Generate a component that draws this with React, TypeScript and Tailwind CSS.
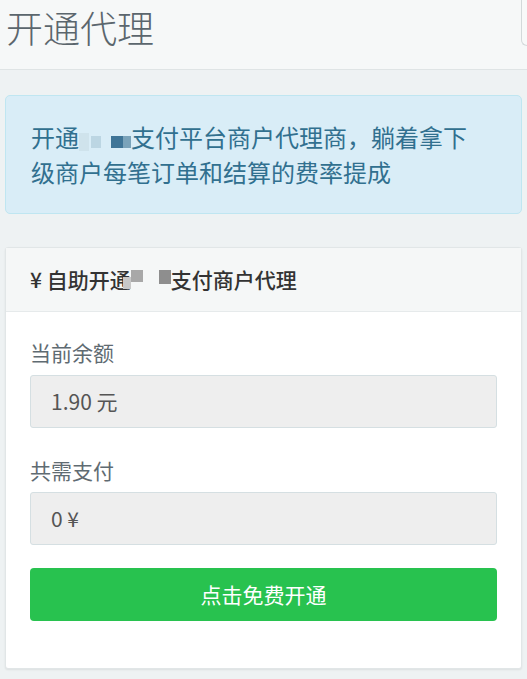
const font = { fontFamily: '"Noto Sans CJK SC", "Noto Sans", sans-serif' };

function Blur({ tone }: { tone: "info" | "gray" }) {
  // the masked brand name in the screenshot
  if (tone === "info") {
    return (
      <span className="inline-flex h-[24px] w-[52px] items-center align-[-4px]">
        <span className="h-[18px] w-[10px] bg-[#cfe3ec]" />
        <span className="ml-[2px] h-[12px] w-[10px] bg-[#bcd6e3]" />
        <span className="ml-[10px] h-[12px] w-[12px] bg-[#3f7597]" />
        <span className="h-[12px] w-[8px] bg-[#7aa3ba]" />
      </span>
    );
  }
  return (
    <span className="inline-flex h-[22px] w-[40px] items-start align-[-3px]">
      <span className="-ml-[8px] mt-[8px] h-[12px] w-[8px] bg-[#c8c8c8]" />
      <span className="mt-[1px] h-[12px] w-[12px] bg-[#a8a8a8]" />
      <span className="ml-[16px] mt-[1px] h-[14px] w-[12px] bg-[#8e8e8e]" />
    </span>
  );
}

export default function App() {
  return (
    <div style={font} className="min-h-[679px] w-[527px] overflow-hidden bg-[#eef2f3]">
      {/* Title bar */}
      <div className="flex h-[70px] items-start border-b border-[#dfe4e5] bg-[#f6f8f8]">
        <h1 className="mt-[4px] pl-[6px] text-[37px] font-light leading-[46px] text-[#5b666d]">
          开通代理
        </h1>
        <div className="ml-auto h-[46px] w-[6px] rounded-bl-[6px] border-b border-l border-[#d3d9da] bg-[#f8f9f9]" />
      </div>

      <div className="px-[5px] pt-[25px]">
        {/* Info alert */}
        <div className="rounded-[5px] border border-[#bfe6f1] bg-[#d9edf7] pb-[24px] pl-[25px] pr-[40px] pt-[23px] text-[24px] leading-[35px] text-[#31708f]">
          开通<Blur tone="info" />支付平台商户代理商，躺着拿下级商户每笔订单和结算的费率提成
        </div>

        {/* Panel */}
        <div className="mt-[33px] rounded-[3px] border border-[#e1e6e7] bg-white shadow-[0_1px_2px_rgba(0,0,0,0.08)]">
          <div className="flex h-[64px] items-center border-b border-[#e6eaeb] bg-[#f5f7f7] px-[24px] text-[21px] font-medium text-[#333]">
            ¥ 自助开通<Blur tone="gray" />支付商户代理
          </div>
          <div className="px-[24px] pb-[47px] pt-[24px]">
            <div className="text-[21px] leading-[32px] text-[#5f6b72]">当前余额</div>
            <div className="mt-[7px] flex h-[53px] items-center rounded-[3px] border border-[#d5dfe2] bg-[#eeeeee] px-[20px] text-[21px] text-[#555]">
              1.90 元
            </div>
            <div className="mt-[26px] text-[21px] leading-[32px] text-[#5f6b72]">共需支付</div>
            <div className="mt-[6px] flex h-[53px] items-center rounded-[3px] border border-[#d5dfe2] bg-[#eeeeee] px-[20px] text-[21px] text-[#555]">
              0 ¥
            </div>
            <button className="mt-[23px] flex h-[53px] w-full items-center justify-center rounded-[4px] bg-[#28c24f] text-[21px] text-white">
              点击免费开通
            </button>
          </div>
        </div>
      </div>
    </div>
  );
}
